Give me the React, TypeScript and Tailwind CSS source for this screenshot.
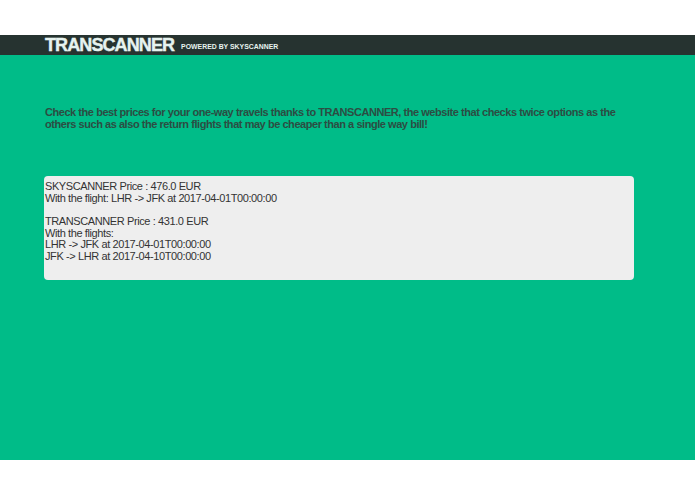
export default function App() {
  return (
    <div className="min-h-screen bg-white font-['Liberation_Sans',Arial,sans-serif]">
      <div className="h-[35px]" />
      <header className="flex h-[20px] items-end bg-[#263330] px-[45px]">
        <span className="text-[18px] font-bold leading-[20px] tracking-[-0.9px] text-[#e6f3ef] [-webkit-text-stroke:0.4px_#e6f3ef]">TRANSCANNER</span>
        <span className="ml-[7px] mb-[4px] text-[6.9px] font-bold leading-none text-[#e6f3ef]">POWERED BY SKYSCANNER</span>
      </header>
      <main className="h-[405px] bg-[#00bc88] px-[44px] pt-[52px]">
        <p className="px-px text-[11px] font-bold leading-[11.5px] tracking-[-0.45px] whitespace-nowrap text-[#2c4d43]">
          Check the best prices for your one-way travels thanks to TRANSCANNER, the website that checks twice options as the
          <br />
          others such as also the return flights that may be cheaper than a single way bill!
        </p>
        <div className="mt-[46px] h-[104px] w-[590px] rounded-[4px] bg-[#eeeeee] px-px pt-[5px] text-[11px] leading-[11.7px] tracking-[-0.4px] text-[#333]">
          <p>SKYSCANNER Price : 476.0 EUR</p>
          <p>With the flight: LHR -&gt; JFK at 2017-04-01T00:00:00</p>
          <p className="mt-[11.5px]">TRANSCANNER Price : 431.0 EUR</p>
          <p>With the flights:</p>
          <p>LHR -&gt; JFK at 2017-04-01T00:00:00</p>
          <p>JFK -&gt; LHR at 2017-04-10T00:00:00</p>
        </div>
      </main>
    </div>
  );
}
